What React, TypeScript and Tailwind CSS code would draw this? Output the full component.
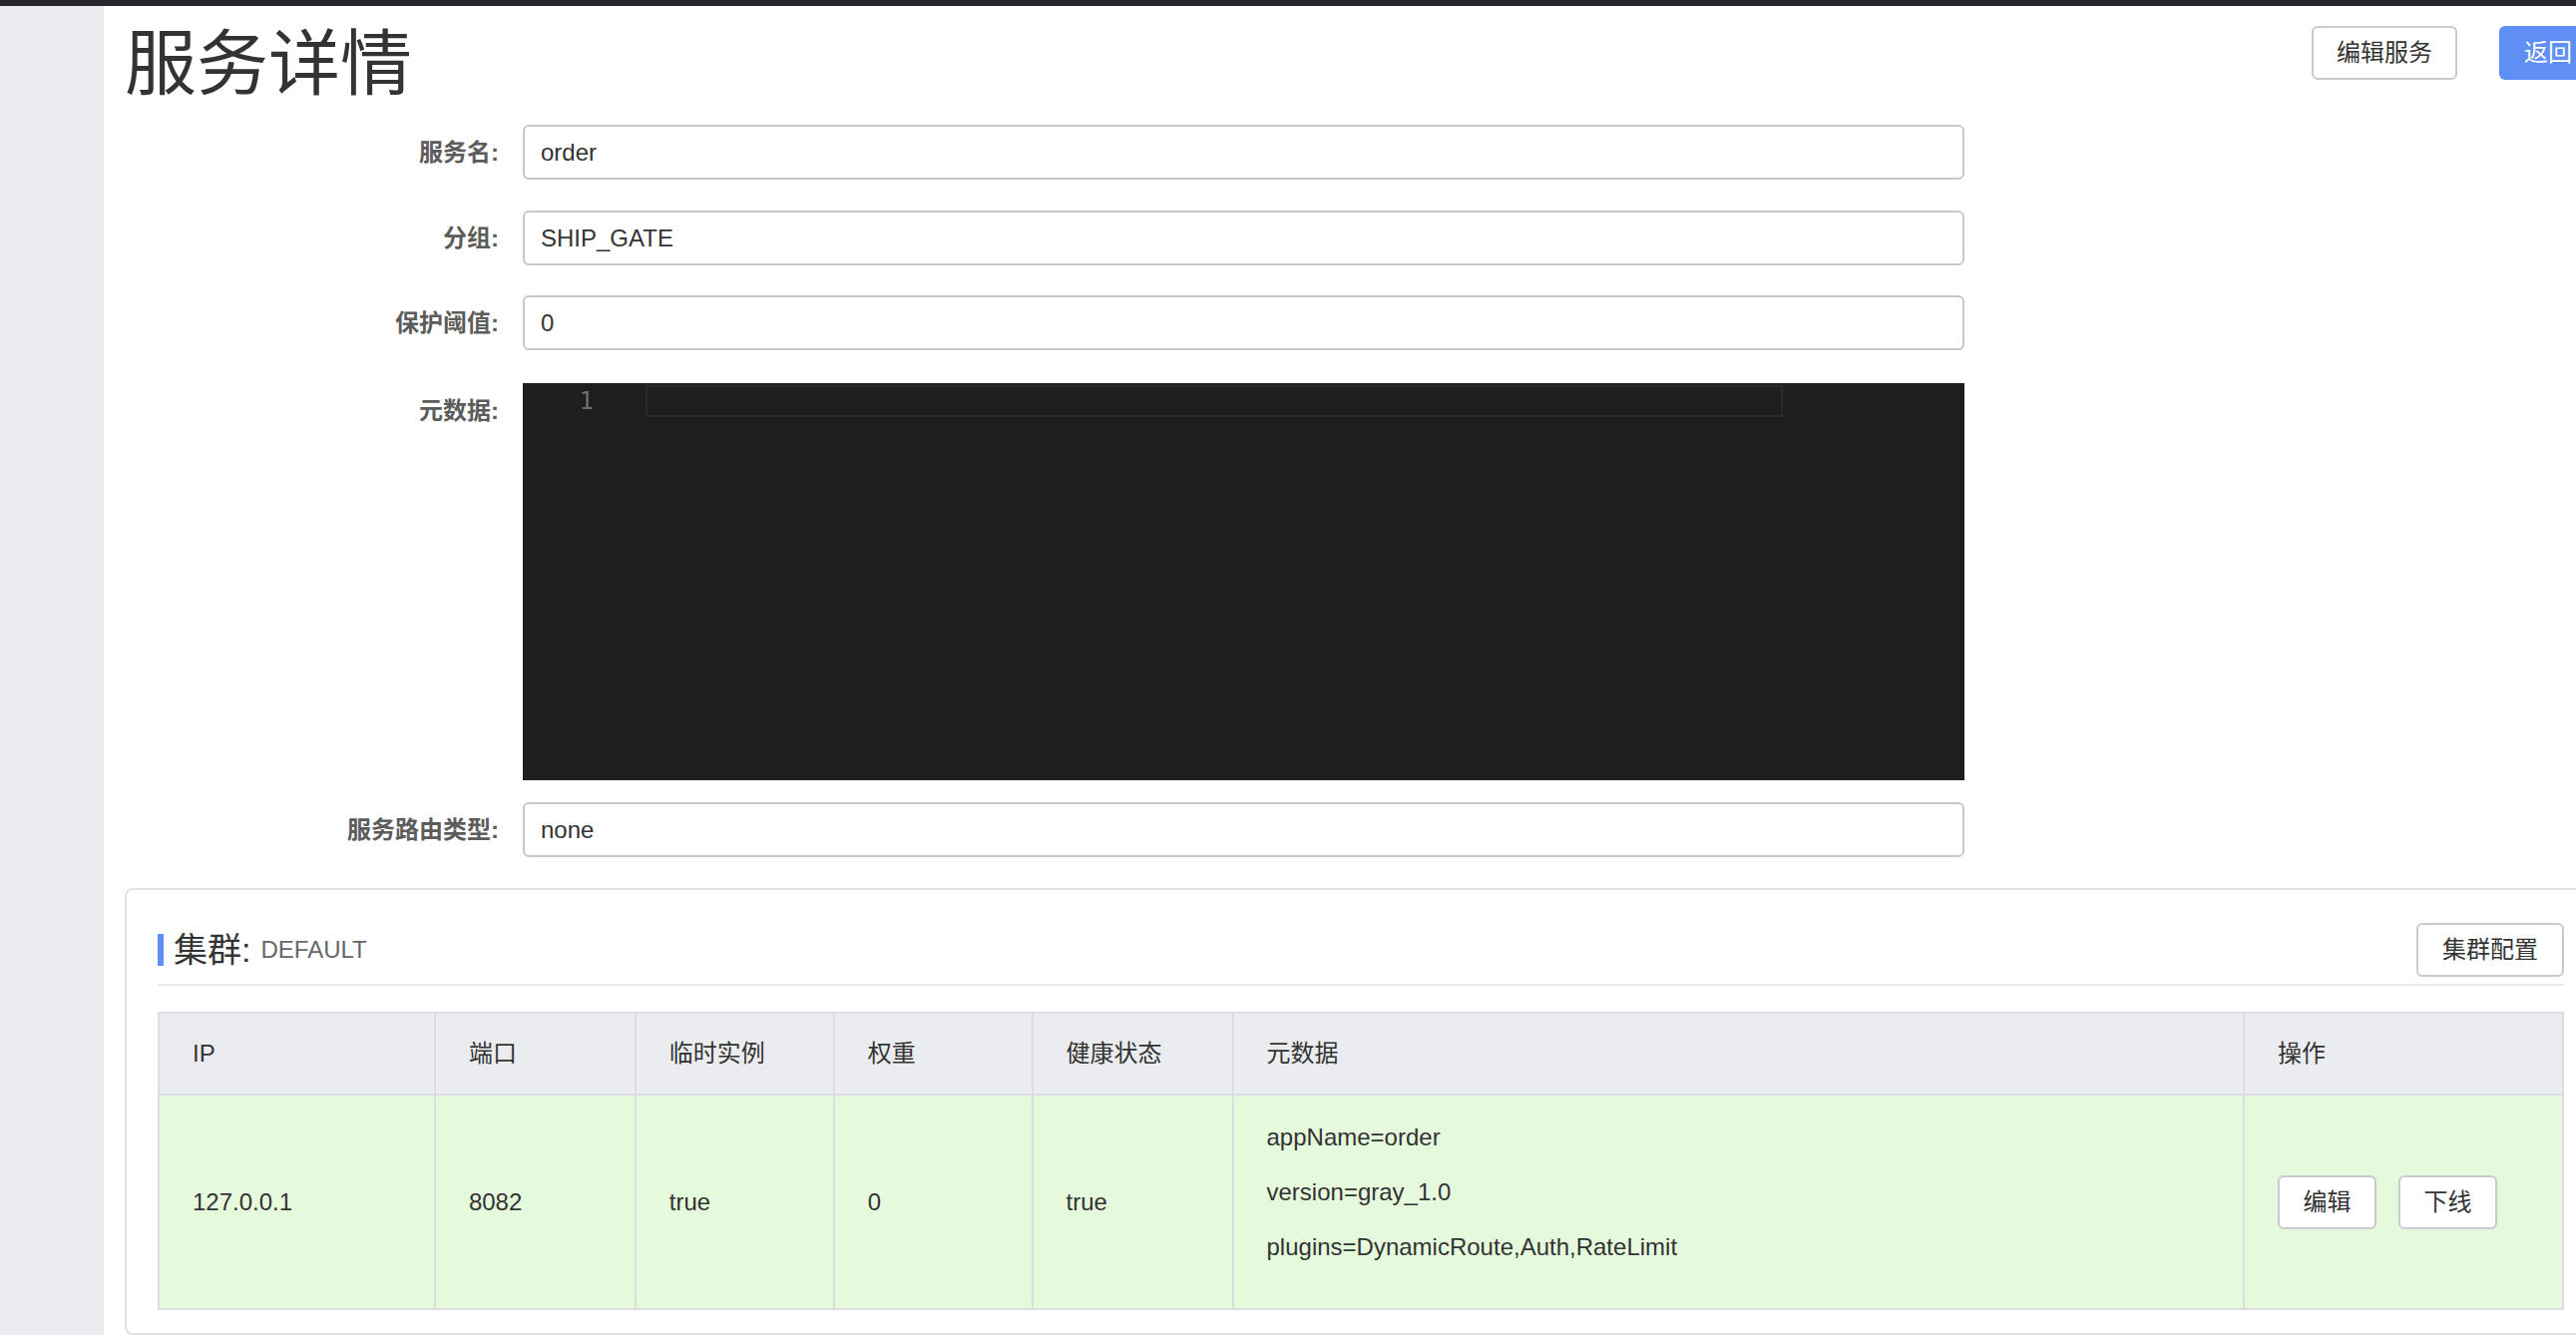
import React from "react";

const font = "font-['Liberation_Sans','Noto_Sans_CJK_SC',sans-serif]";

type FieldProps = { label: string; value: string; className?: string };

// Form row: right-aligned bold label, bordered read-only input
const Field = ({ label, value, className }: FieldProps) => (
  <div className={`flex items-center gap-[24px] ${className ?? ""}`}>
    <label className="w-[375px] shrink-0 text-right text-[24px] font-bold text-[#5c5c5c]">
      {label}
    </label>
    <div className="flex h-[55px] w-[1445px] items-center rounded-[6px] border-2 border-[#c6c8cd] bg-white pl-[16px] text-[24px] text-[#333]">
      {value}
    </div>
  </div>
);

const Btn = ({ children, className }: { children: React.ReactNode; className?: string }) => (
  <button
    className={`h-[54px] rounded-[6px] border-2 border-[#c8cacf] bg-white text-[24px] text-[#333] ${className ?? ""}`}
  >
    {children}
  </button>
);

const cols = [
  { name: "IP", w: "w-[277px]" },
  { name: "端口", w: "w-[201px]" },
  { name: "临时实例", w: "w-[199px]" },
  { name: "权重", w: "w-[199px]" },
  { name: "健康状态", w: "w-[201px]" },
  { name: "元数据", w: "w-[1014px]" },
  { name: "操作", w: "w-[320px]" },
];

const App = () => {
  return (
    <div className={`flex h-[1338px] w-full flex-col overflow-hidden bg-white ${font}`}>
      <div className="h-[6px] w-full shrink-0 bg-[#25272b]" />
      <div className="flex min-h-0 flex-1">
        {/* sidebar */}
        <div className="w-[104px] shrink-0 bg-[#ebecf0]" />

        <div className="w-[2520px] shrink-0 px-[21px] pt-[20px]">
          {/* header */}
          <div className="flex items-start justify-between">
            <h1 className="-mt-[2px] text-[72px] leading-[80px] font-normal text-[#333]">服务详情</h1>
            <div className="flex gap-[42px]">
              <Btn className="w-[146px]">编辑服务</Btn>
              <button className="h-[54px] w-[98px] rounded-[6px] bg-[#5f8ff5] text-[24px] text-white">
                返回
              </button>
            </div>
          </div>

          {/* form */}
          <div className="mt-[21px] flex flex-col">
            <Field label="服务名:" value="order" />
            <Field label="分组:" value="SHIP_GATE" className="mt-[31px]" />
            <Field label="保护阈值:" value="0" className="mt-[30px]" />
            <div className="mt-[33px] flex items-start gap-[24px]">
              <label className="flex h-[55px] w-[375px] shrink-0 items-center justify-end text-[24px] font-bold text-[#5c5c5c]">
                元数据:
              </label>
              <div className="flex h-[398px] w-[1445px] items-start bg-[#1e1e1e] pt-[2px]">
                <div className="w-[123px] shrink-0 pr-[52px] text-right font-['DejaVu_Sans_Mono',monospace] text-[24px] leading-[32px] text-[#6e6e6e]">
                  1
                </div>
                <div className="h-[32px] w-[1140px] border-2 border-[#2a2a2a]" />
              </div>
            </div>
            <Field label="服务路由类型:" value="none" className="mt-[22px]" />
          </div>

          {/* cluster card */}
          <div className="mt-[31px] rounded-[8px] border-2 border-[#e1e2e6] px-[31px] pt-[33px] pb-[23px]">
            <div className="flex items-center justify-between">
              <div className="flex items-center">
                <span className="h-[32px] w-[6px] bg-[#5f8ff5]" />
                <span className="ml-[10px] text-[34px] text-[#333]">集群:</span>
                <span className="ml-[10px] text-[24px] text-[#666]">DEFAULT</span>
              </div>
              <Btn className="w-[148px]">集群配置</Btn>
            </div>
            <div className="mt-[7px] h-[2px] bg-[#e6e7eb]" />

            <table className="mt-[26px] w-full border-collapse text-[24px] text-[#333]">
              <thead>
                <tr className="h-[82px] bg-[#ebecf0]">
                  {cols.map((c) => (
                    <th
                      key={c.name}
                      className={`${c.w} border-2 border-[#dcdde1] px-[33px] text-left font-normal`}
                    >
                      {c.name}
                    </th>
                  ))}
                </tr>
              </thead>
              <tbody>
                <tr className="h-[214px] bg-[#e5f9dc]">
                  <td className="border-2 border-[#dcdde1] px-[33px]">127.0.0.1</td>
                  <td className="border-2 border-[#dcdde1] px-[33px]">8082</td>
                  <td className="border-2 border-[#dcdde1] px-[33px]">true</td>
                  <td className="border-2 border-[#dcdde1] px-[33px]">0</td>
                  <td className="border-2 border-[#dcdde1] px-[33px]">true</td>
                  <td className="border-2 border-[#dcdde1] px-[33px] pt-[14px] pb-[34px] leading-[55px]">
                    <p>appName=order</p>
                    <p>version=gray_1.0</p>
                    <p>plugins=DynamicRoute,Auth,RateLimit</p>
                  </td>
                  <td className="border-2 border-[#dcdde1] px-[33px]">
                    <div className="flex gap-[22px]">
                      <Btn className="w-[99px]">编辑</Btn>
                      <Btn className="w-[99px]">下线</Btn>
                    </div>
                  </td>
                </tr>
              </tbody>
            </table>
          </div>
        </div>
      </div>
    </div>
  );
};

export default App;
